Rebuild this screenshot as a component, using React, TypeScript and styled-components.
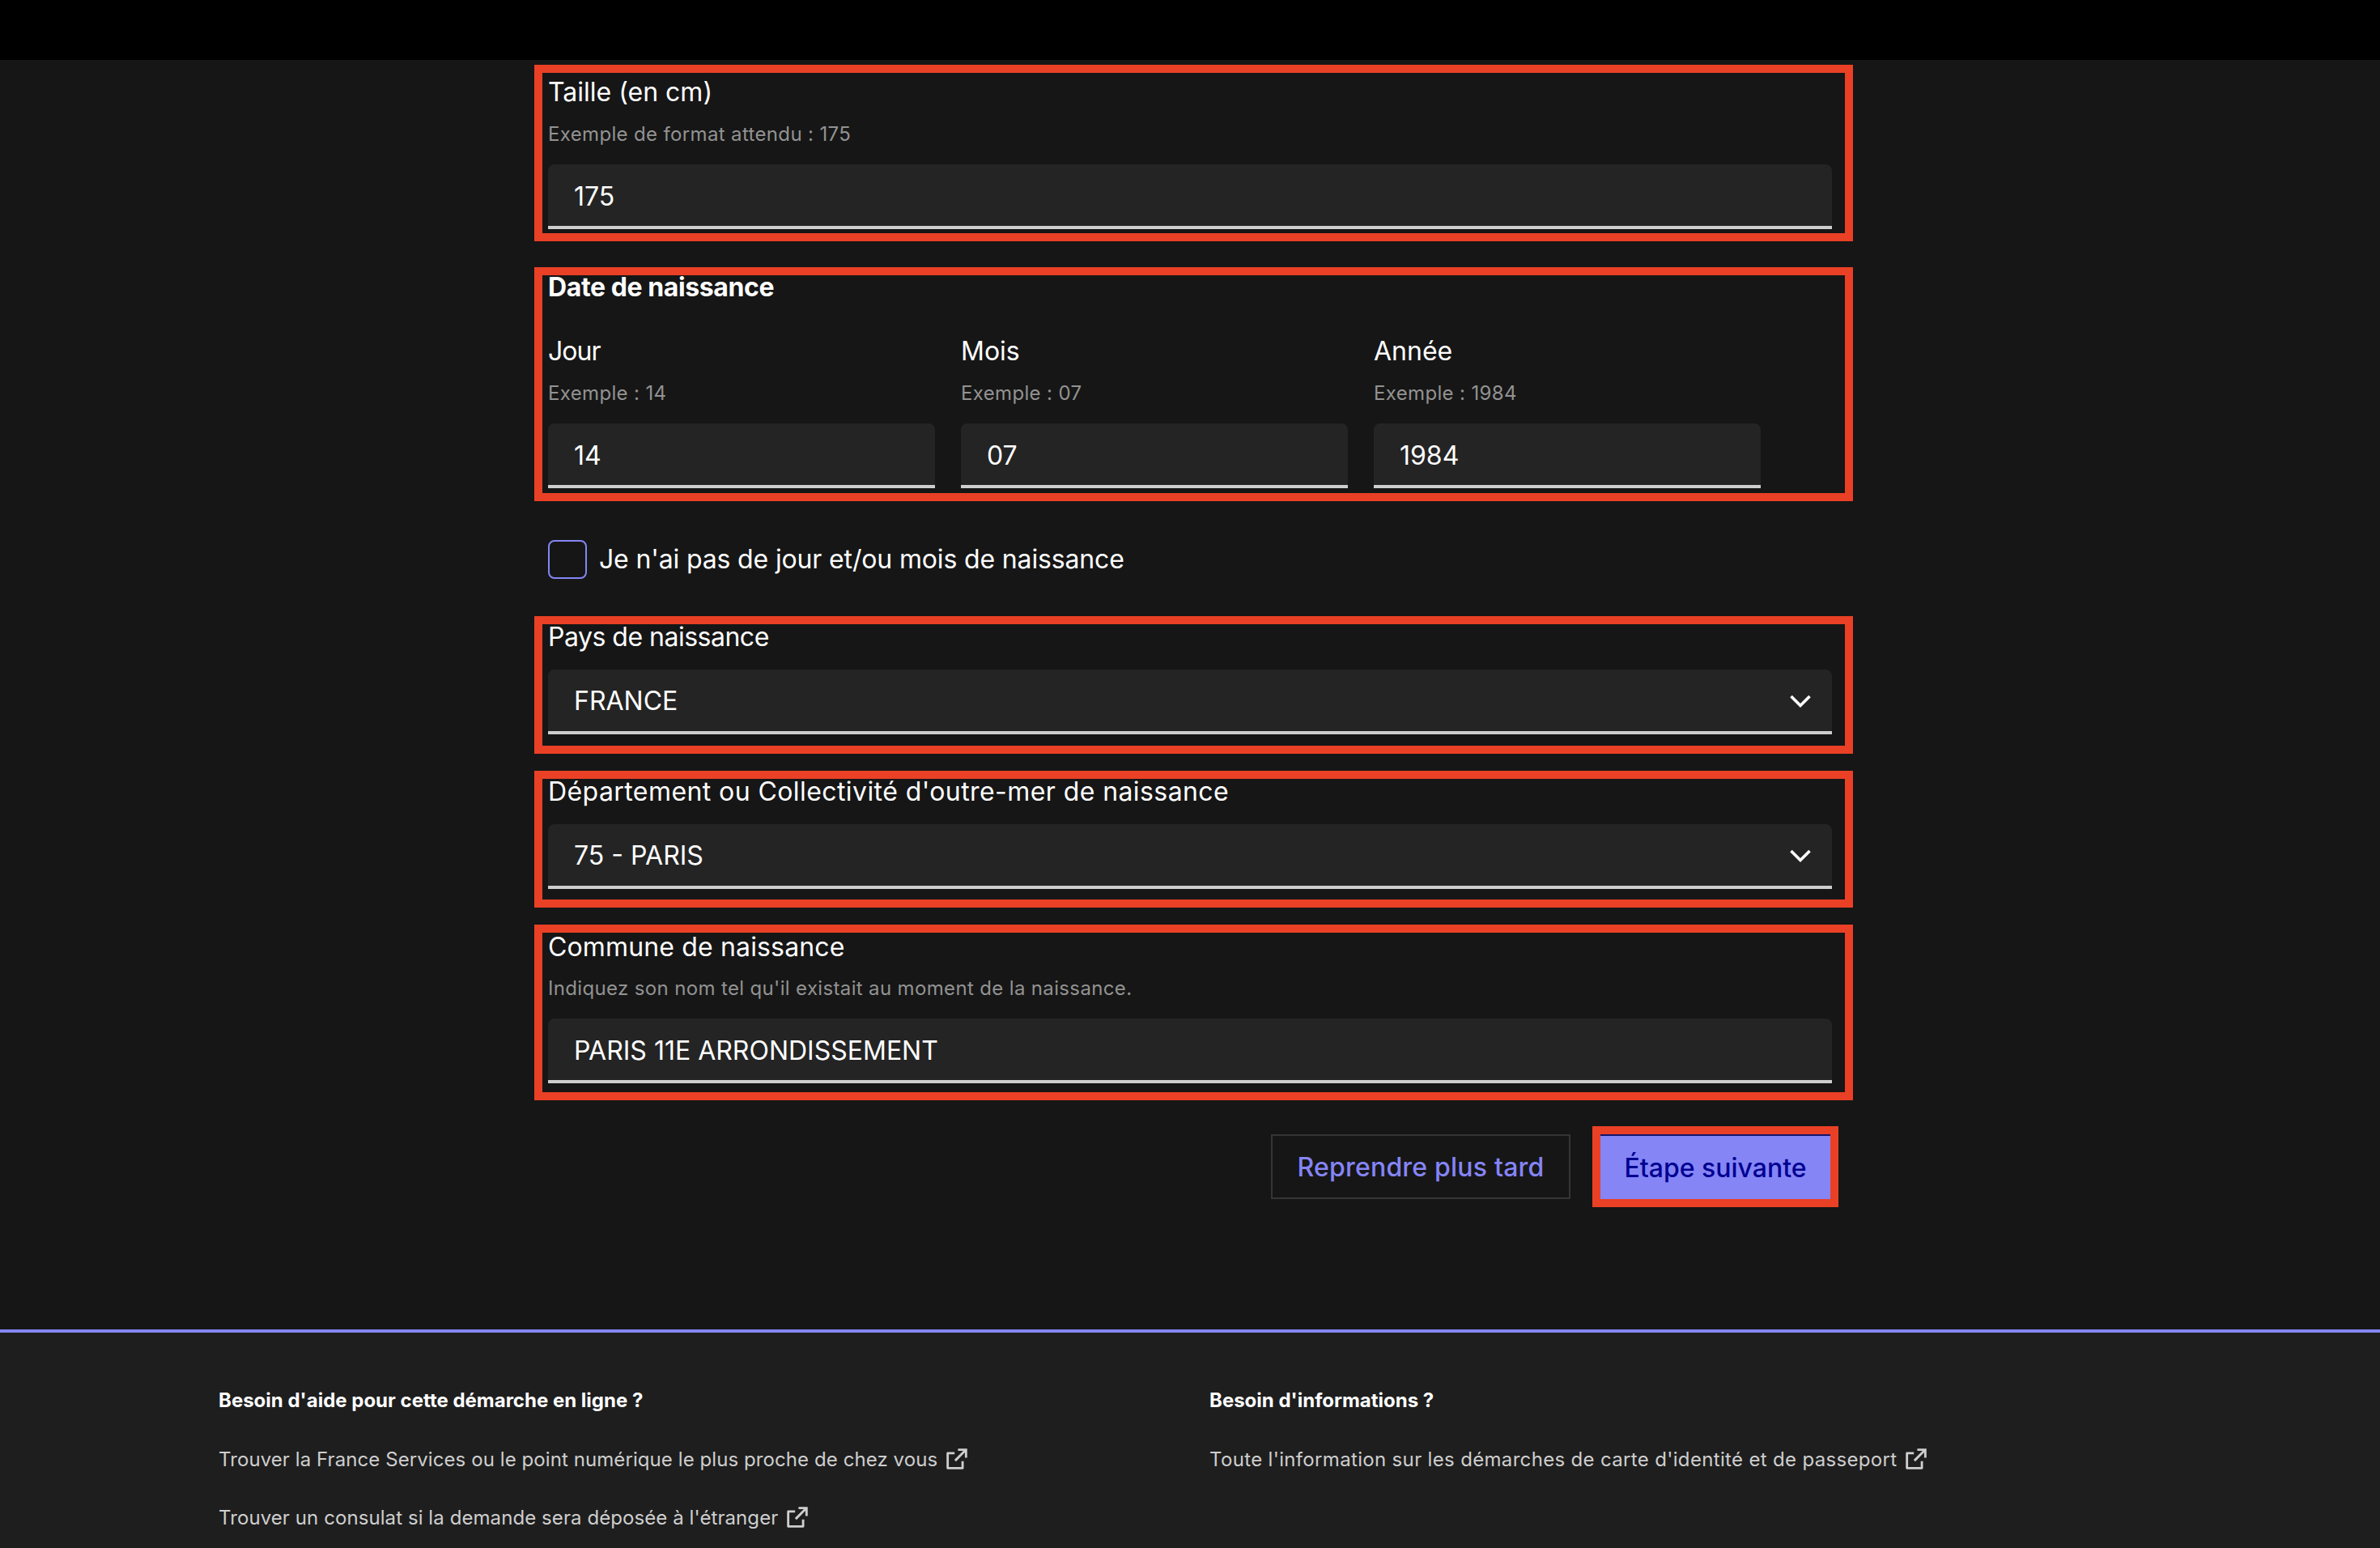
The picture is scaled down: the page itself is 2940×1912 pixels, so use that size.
import React from "react";
import styled, { createGlobalStyle } from "styled-components";
import { RiExternalLinkLine } from "react-icons/ri";

const GlobalStyle = createGlobalStyle`
  html, body {
    margin: 0;
    padding: 0;
    background: #161616;
  }
  * {
    box-sizing: border-box;
  }
`;

const font = `"Inter", "Noto Sans", sans-serif`;

const Page = styled.div`
  height: 1912px;
  overflow: hidden;
  background: #161616;
  color: #fff;
  font-family: ${font};
`;

const TopBar = styled.div`
  height: 74px;
  background: #000;
`;

const Form = styled.form`
  display: flex;
  flex-direction: column;
  width: 1629px;
  margin-left: 660px;
  padding-top: 6px;
`;

const Highlight = styled.div<{ $mt?: number; $pb?: number }>`
  display: flex;
  flex-direction: column;
  margin-top: ${(p) => p.$mt ?? 0}px;
  padding: 0 16px ${(p) => p.$pb ?? 5}px 7px;
  border: 10px solid #ea4025;
`;

const Label = styled.label<{ $lh?: number; $ls?: number }>`
  display: block;
  font-size: 32px;
  line-height: ${(p) => p.$lh ?? 48}px;
  letter-spacing: ${(p) => p.$ls ?? 0}px;
  color: #fff;
`;

const Hint = styled.div<{ $mt?: number }>`
  margin-top: ${(p) => p.$mt ?? 8}px;
  font-size: 24px;
  line-height: 40px;
  letter-spacing: 0.35px;
  color: #929292;
`;

const TextInput = styled.input`
  display: block;
  width: 100%;
  height: 80px;
  margin-top: 17px;
  padding: 2px 32px 0;
  background: #242424;
  border: 0;
  border-bottom: 4px solid #cecece;
  border-radius: 8px 8px 0 0;
  outline: none;
  color: #fff;
  font-family: ${font};
  font-size: 32px;
`;

const Legend = styled.div`
  font-size: 32px;
  line-height: 30px;
  font-weight: 700;
  letter-spacing: -0.4px;
  color: #fff;
`;

const DateRow = styled.div`
  display: flex;
  gap: 32px;
  margin-top: 40px;
`;

const DateCol = styled.div`
  width: 478px;
`;

const CheckRow = styled.div`
  display: flex;
  align-items: center;
  gap: 15px;
  margin: 48px 0 46px 17px;
`;

const CheckBox = styled.input`
  appearance: none;
  width: 48px;
  height: 48px;
  margin: 0;
  background: transparent;
  border: 2px solid #8585f6;
  border-radius: 8px;
`;

const SelectWrap = styled.div`
  position: relative;
  margin-top: 24px;
`;

const Select = styled.select`
  display: block;
  width: 100%;
  height: 80px;
  padding: 0 32px;
  appearance: none;
  background: #242424;
  border: 0;
  border-bottom: 4px solid #cecece;
  border-radius: 8px 8px 0 0;
  outline: none;
  color: #fff;
  font-family: ${font};
  font-size: 32px;
`;

const Chevron = styled.svg`
  position: absolute;
  top: 30px;
  right: 25px;
  pointer-events: none;
`;

const Actions = styled.div`
  display: flex;
  justify-content: flex-end;
  align-items: center;
  gap: 27px;
  margin-top: 32px;
  padding-right: 18px;
`;

const SecondaryButton = styled.button`
  height: 80px;
  width: 370px;
  background: transparent;
  border: 2px solid #353535;
  color: #8585f6;
  font-family: ${font};
  font-size: 32px;
  font-weight: 500;
  letter-spacing: 0.2px;
`;

const PrimaryFrame = styled.div`
  border: 10px solid #ea4025;
`;

const PrimaryButton = styled.button`
  display: block;
  height: 80px;
  width: 284px;
  background: #8585f6;
  border: 0;
  border-top: 2px solid #14146b;
  color: #000091;
  font-family: ${font};
  font-size: 32px;
  font-weight: 500;
`;

const Footer = styled.footer`
  display: grid;
  grid-template-columns: 1224px 1fr;
  height: 270px;
  margin-top: 151px;
  padding: 64px 0 0 270px;
  background: #1e1e1e;
  border-top: 4px solid #8585f6;
`;

const FooterCol = styled.div`
  display: flex;
  flex-direction: column;
`;

const FooterTitle = styled.div`
  font-size: 24px;
  line-height: 40px;
  font-weight: 700;
  color: #fff;
`;

const FooterLink = styled.a<{ $ls?: number }>`
  display: flex;
  align-items: center;
  gap: 7px;
  height: 40px;
  margin-top: 32px;
  font-size: 24px;
  letter-spacing: ${(p) => p.$ls ?? 0.08}px;
  color: #cecece;
  svg {
    flex: none;
  }
`;

const DownArrow = () => (
  <Chevron width="28" height="18" viewBox="0 0 28 18" fill="none">
    <path d="M2.5 3L14 14.5L25.5 3" stroke="#fff" strokeWidth="3.6" />
  </Chevron>
);

const App = (): JSX.Element => {
  return (
    <Page>
      <GlobalStyle />
      <TopBar />
      <Form>
        <Highlight>
          <Label>Taille (en cm)</Label>
          <Hint>Exemple de format attendu : 175</Hint>
          <TextInput defaultValue="175" />
        </Highlight>

        <Highlight $mt={32} $pb={6}>
          <Legend>Date de naissance</Legend>
          <DateRow>
            <DateCol>
              <Label $ls={-1}>Jour</Label>
              <Hint>Exemple : 14</Hint>
              <TextInput defaultValue="14" />
            </DateCol>
            <DateCol>
              <Label>Mois</Label>
              <Hint>Exemple : 07</Hint>
              <TextInput defaultValue="07" />
            </DateCol>
            <DateCol>
              <Label>Année</Label>
              <Hint>Exemple : 1984</Hint>
              <TextInput defaultValue="1984" />
            </DateCol>
          </DateRow>
        </Highlight>

        <CheckRow>
          <CheckBox type="checkbox" />
          <Label $ls={-0.15}>Je n'ai pas de jour et/ou mois de naissance</Label>
        </CheckRow>

        <Highlight $pb={14}>
          <Label $lh={32} $ls={-0.5}>Pays de naissance</Label>
          <SelectWrap>
            <Select defaultValue="FRANCE">
              <option>FRANCE</option>
            </Select>
            <DownArrow />
          </SelectWrap>
        </Highlight>

        <Highlight $mt={21} $pb={13}>
          <Label $lh={32} $ls={0.42}>Département ou Collectivité d'outre-mer de naissance</Label>
          <SelectWrap>
            <Select defaultValue="75 - PARIS">
              <option>75 - PARIS</option>
            </Select>
            <DownArrow />
          </SelectWrap>
        </Highlight>

        <Highlight $mt={21} $pb={11}>
          <Label $lh={36} $ls={0.15}>Commune de naissance</Label>
          <Hint $mt={13}>Indiquez son nom tel qu'il existait au moment de la naissance.</Hint>
          <TextInput defaultValue="PARIS 11E ARRONDISSEMENT" />
        </Highlight>

        <Actions>
          <SecondaryButton type="button">Reprendre plus tard</SecondaryButton>
          <PrimaryFrame>
            <PrimaryButton type="button">Étape suivante</PrimaryButton>
          </PrimaryFrame>
        </Actions>
      </Form>

      <Footer>
        <FooterCol>
          <FooterTitle>Besoin d'aide pour cette démarche en ligne ?</FooterTitle>
          <FooterLink>
            Trouver la France Services ou le point numérique le plus proche de chez vous
            <RiExternalLinkLine size={34} />
          </FooterLink>
          <FooterLink>
            Trouver un consulat si la demande sera déposée à l'étranger
            <RiExternalLinkLine size={34} />
          </FooterLink>
        </FooterCol>
        <FooterCol>
          <FooterTitle>Besoin d'informations ?</FooterTitle>
          <FooterLink $ls={0.33}>
            Toute l'information sur les démarches de carte d'identité et de passeport
            <RiExternalLinkLine size={34} />
          </FooterLink>
        </FooterCol>
      </Footer>
    </Page>
  );
};

export default App;
